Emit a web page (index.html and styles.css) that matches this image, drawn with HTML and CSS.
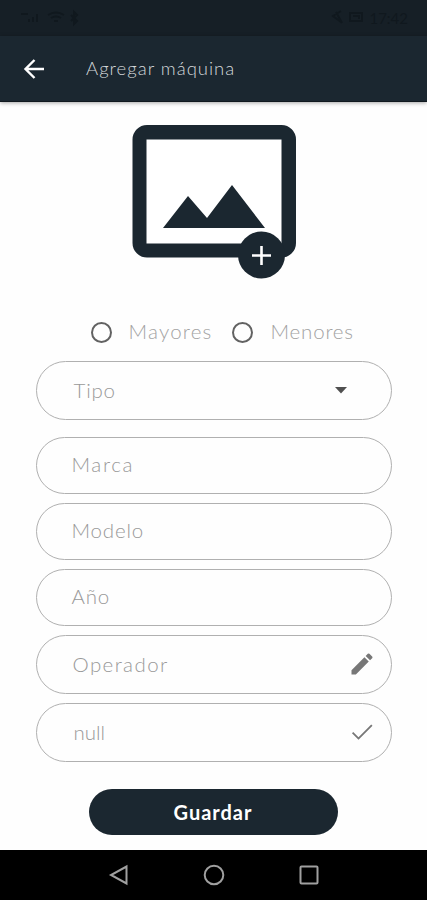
FILE: index.html
```
<!DOCTYPE html>
<html lang="es">
<head>
    <meta charset="UTF-8">
    <meta name="viewport" content="width=device-width, initial-scale=1.0">
    <title>Agregar máquina</title>
    <link rel="stylesheet" href="styles.css">
</head>
<body>
    <div class="status">
        <svg class="status-left" width="62" height="18" viewBox="0 0 62 18" fill="none" stroke="currentColor" stroke-width="2">
            <path d="M1 5h7M9 13v-3M13 13V8M17 13V5M28 6q8-5 16 0M31 9q5-3 10 0M34 12h4M51 6l6 6-3 3V3l3 3-6 6"/>
        </svg>
        <div class="status-right">
            <svg width="34" height="16" viewBox="0 0 34 16" fill="none" stroke="currentColor" stroke-width="2">
                <path d="M10 2L2 7l8 6M5 3l6 11M19 4h12v8H19zM22 7h6v3"/>
            </svg>
            <span>17:42</span>
        </div>
    </div>
    <header class="appbar">
        <svg class="back" width="24" height="24" viewBox="0 0 24 24" fill="none" stroke="#fff" stroke-width="2.4">
            <path d="M22 12H4M12.5 3L3.5 12l9 9"/>
        </svg>
        <h1>Agregar máquina</h1>
    </header>

    <main>
        <svg class="photo" width="164" height="154" viewBox="0 0 164 154">
            <rect x="8" y="7.5" width="148.500" height="117.500" rx="7" fill="none" stroke="#1b2730" stroke-width="15"/>
            <path d="M14.5 14.5h135v104h-135z" fill="#fff"/>
            <path d="M31 103l25-32 19 22 25-33 33 43z" fill="#1b2730"/>
            <circle cx="129.500" cy="130" r="23.5" fill="#1b2730"/>
            <path d="M120 130.500h19M129.500 121v19" stroke="#fff" stroke-width="2.6"/>
        </svg>

        <form>
            <div class="radios">
                <label class="radio"><span class="dot"></span><span class="t-mayores">Mayores</span></label>
                <label class="radio"><span class="dot"></span><span class="t-menores">Menores</span></label>
            </div>

            <div class="field tipo">
                <span class="t-tipo">Tipo</span>
                <svg class="caret" width="12" height="7" viewBox="0 0 12 7"><path d="M0 0h12L6 6.500z" fill="#505050"/></svg>
            </div>
            <div class="field marca"><span class="t-marca">Marca</span></div>
            <div class="field modelo"><span class="t-modelo">Modelo</span></div>
            <div class="field anio"><span class="t-anio">Año</span></div>
            <div class="field operador">
                <span class="t-operador">Operador</span>
                <svg width="28" height="28" viewBox="0 0 24 24" fill="#777">
                    <path d="M3 17.250V21h3.750L17.810 9.940l-3.750-3.750L3 17.250zM20.710 7.040a1 1 0 0 0 0-1.410l-2.340-2.340a1 1 0 0 0-1.410 0l-1.830 1.830 3.750 3.750 1.830-1.830z"/>
                </svg>
            </div>
            <div class="field nulo">
                <span class="t-null">null</span>
                <svg width="28" height="28" viewBox="0 0 24 24" fill="#777">
                    <path d="M9 16.500L4.500 12l-1.100 1.100L9 18.700 21 6.700l-1.100-1.100z"/>
                </svg>
            </div>

            <button type="button" class="guardar">Guardar</button>
        </form>
    </main>

    <nav class="navbar">
        <svg width="22" height="22" viewBox="0 0 22 22"><path d="M18.500 2.500v17L3 11z"/></svg>
        <svg width="22" height="22" viewBox="0 0 22 22"><circle cx="11" cy="11" r="9.300"/></svg>
        <svg width="22" height="22" viewBox="0 0 22 22"><rect x="2.500" y="2.500" width="17" height="17" rx="1"/></svg>
    </nav>
</body>
</html>
```
FILE: styles.css
```
* { box-sizing: border-box; }
body { margin: 0; height: 900px; display: flex; flex-direction: column; background: #fefefe; font-family: Lato, "Open Sans", sans-serif; overflow: hidden; }

.status { height: 36px; flex: none; background: #161f26; color: #10181e; display: flex; justify-content: space-between; padding: 9px 19px 0 20px; font-size: 15px; line-height: 18px; }
.status-right { display: flex; gap: 4px; }
.appbar { height: 66px; flex: none; background: #1b2730; display: flex; align-items: center; padding-left: 22px; border-bottom: 1px solid #11191f; box-shadow: 0 1px 4px rgba(0, 0, 0, 0.35); }
.appbar h1 { margin: -1px 0 0 40px; font-size: 18.5px; font-weight: 300; letter-spacing: 1px; color: #d3d7da; }

main { flex: 1; display: flex; flex-direction: column; align-items: center; padding-top: 23px; }
.photo { margin-left: 1px; flex: none; }
form { width: 356px; margin-top: 40px; display: flex; flex-direction: column; }

.radios { height: 26px; display: flex; align-items: center; padding-left: 55px; margin-bottom: 16px; font-size: 20.5px; font-weight: 300; letter-spacing: 1px; color: #a2a2a2; }
.radio { width: 141px; flex: none; display: flex; align-items: center; gap: 17px; white-space: nowrap; }
.radio span:last-child { padding-bottom: 2px; }
.t-mayores { letter-spacing: 1.2px; }
.t-menores { letter-spacing: 0.8px; padding-left: 1px; }
.dot { width: 21px; height: 21px; border: 2px solid #626262; border-radius: 50%; }

.field { height: 57px; border: 1px solid #b0b0b0; border-radius: 30px; display: flex; align-items: center; justify-content: space-between; padding: 0 15px 3px 35px; margin-bottom: 9px; font-size: 20.5px; font-weight: 300; letter-spacing: 0.8px; color: #999; }
.field span { padding-bottom: 1px; }
.tipo { height: 59px; padding: 0 44px 1px 37px; margin-bottom: 17px; }
.operador, .nulo { height: 59px; padding: 0 15px 1px 36px; }
.t-marca { letter-spacing: 1.6px; }
.t-operador { letter-spacing: 1.4px; }
.t-null { letter-spacing: 0; padding-left: 1px; }

.guardar { width: 249px; height: 46px; margin: 18px 0 0 53px; border: 0; border-radius: 23px; background: #1b2730; color: #fff; font: bold 20px Lato, sans-serif; letter-spacing: 1px; }

.navbar { height: 50px; flex: none; background: #000; display: flex; justify-content: center; align-items: center; gap: 73px; }
.navbar svg { fill: none; stroke: #a0a0a0; stroke-width: 2; }
```
